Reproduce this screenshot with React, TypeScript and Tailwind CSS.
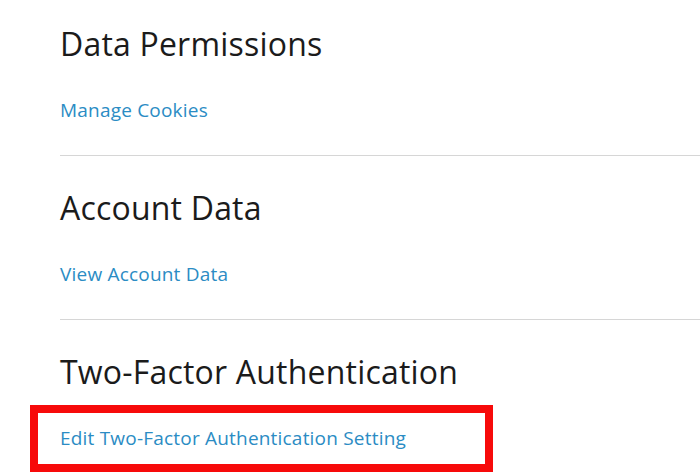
import React from "react";

const sections = [
  { title: "Data Permissions", link: "Manage Cookies" },
  { title: "Account Data", link: "View Account Data" },
];

export default function App() {
  return (
    <div
      className="w-[700px] h-[475px] overflow-hidden bg-white pl-[60px] pt-[24px]"
      style={{ fontFamily: '"Open Sans", "Noto Sans", sans-serif' }}
    >
      {sections.map((s) => (
        <section key={s.title}>
          <h2 className="text-[32px] leading-[40px] tracking-[0.2px] text-[#1b1b1b] font-normal">
            {s.title}
          </h2>
          <a
            href="#"
            className="block mt-[34px] text-[19px] leading-[24px] tracking-[0.2px] text-[#2b8cc4]"
          >
            {s.link}
          </a>
          <div className="mt-[33px] mb-[32px] h-px bg-[#d6d6d6]" />
        </section>
      ))}
      <section>
        <h2 className="text-[32px] leading-[40px] tracking-[0.2px] text-[#1b1b1b] font-normal">
          Two-Factor Authentication
        </h2>
        <div className="-ml-[30px] mt-[13px] w-[463px] border-[8px] border-[#f70a0a] pl-[22px] pt-[13px] pb-[14px]">
          <a
            href="#"
            className="block text-[19px] leading-[24px] tracking-[0.2px] text-[#2b8cc4]"
          >
            Edit Two-Factor Authentication Setting
          </a>
        </div>
      </section>
    </div>
  );
}
